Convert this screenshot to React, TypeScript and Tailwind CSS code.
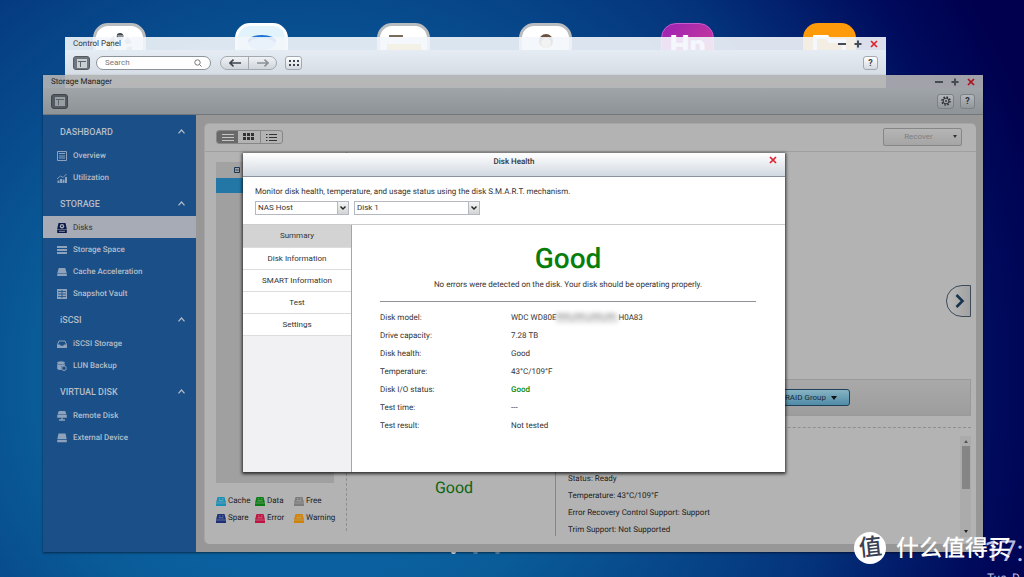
import React from "react";
import clsx from "clsx";

type IconName =
  | "overview"
  | "chart"
  | "disk"
  | "stack"
  | "drive"
  | "vault"
  | "tray"
  | "backup"
  | "remote"
  | "external";

interface NavSection {
  title: string;
  items: { label: string; icon: IconName; active?: boolean }[];
}

const NAV: NavSection[] = [
  {
    title: "DASHBOARD",
    items: [
      { label: "Overview", icon: "overview" },
      { label: "Utilization", icon: "chart" },
    ],
  },
  {
    title: "STORAGE",
    items: [
      { label: "Disks", icon: "disk", active: true },
      { label: "Storage Space", icon: "stack" },
      { label: "Cache Acceleration", icon: "drive" },
      { label: "Snapshot Vault", icon: "vault" },
    ],
  },
  {
    title: "iSCSI",
    items: [
      { label: "iSCSI Storage", icon: "tray" },
      { label: "LUN Backup", icon: "backup" },
    ],
  },
  {
    title: "VIRTUAL DISK",
    items: [
      { label: "Remote Disk", icon: "remote" },
      { label: "External Device", icon: "external" },
    ],
  },
];

const LEGEND = [
  { label: "Cache", color: "#1b8fb5" },
  { label: "Data", color: "#0b7d14" },
  { label: "Free", color: "#7d7d7d" },
  { label: "Spare", color: "#1c2f78" },
  { label: "Error", color: "#bf1443" },
  { label: "Warning", color: "#cf8208" },
];

const DISK_INFO = [
  "Status: Ready",
  "Temperature: 43°C/109°F",
  "Error Recovery Control Support: Support",
  "Trim Support: Not Supported",
];

const TABS = ["Summary", "Disk Information", "SMART Information", "Test", "Settings"];

const NAV_ICONS: Record<IconName, React.ReactNode> = {
  overview: (
    <>
      <path d="M.5.5h9v9h-9z" fill="none" stroke="currentColor" />
      <path d="M2 2.5h6M3 4v4M5 4v4M7 4v4" stroke="currentColor" />
    </>
  ),
  chart: (
    <>
      <path d="M.5 7.5h2V10h-2zM3 6h2v4H3zM5.500 6.500h2V10h-2zM8 4h2v6H8z" fill="currentColor" />
      <path d="M0 6l3.500-3L6 4.500 9.500 1" fill="none" stroke="currentColor" strokeWidth=".9" />
    </>
  ),
  disk: (
    <>
      <path d="M1.500 0h7l1.300 6H.2zM.2 6.600h9.600V10H.2z" fill="#0b1a4a" />
      <circle cx="5" cy="3.200" r="2.200" fill="#a6abb5" />
      <circle cx="5" cy="3.200" r=".9" fill="#0b1a4a" />
      <path d="M2 8.300h6" stroke="#a6abb5" strokeWidth=".8" />
    </>
  ),
  stack: <path d="M0 1h10v2H0zM0 4h10v2H0zM0 7h10v2H0z" fill="currentColor" />,
  drive: <path d="M1.800 1h6.400l1.500 5H.3zM.2 6.600h9.600V9H.2z" fill="currentColor" />,
  vault: (
    <>
      <path d="M0 0h10v10H0z" fill="currentColor" />
      <path d="M1 2.500h8M1 5h8M1 7.500h8M5 1v8" stroke="#1a4f87" strokeWidth=".8" />
    </>
  ),
  tray: (
    <>
      <path d="M2 2h6l1.500 3.500v3h-9v-3z" fill="none" stroke="currentColor" />
      <path d="M0 5.500h3l.8 1.200h2.400L7 5.500h3V9H0z" fill="currentColor" />
    </>
  ),
  backup: (
    <>
      <ellipse cx="4" cy="1.700" rx="3.800" ry="1.500" fill="currentColor" />
      <path d="M.2 2.800c1.500 1.200 6 1.200 7.600 0V5H4.500v4C2.500 9 .7 8.700.2 8z" fill="currentColor" />
      <circle cx="7" cy="7.200" r="2.300" fill="#1a4f87" stroke="currentColor" />
    </>
  ),
  remote: (
    <>
      <path d="M1.800 0h6.400l1.300 3.500H.5zM.2 4h9.600v2.800H.2z" fill="currentColor" />
      <path d="M5 6.500v2M2 9h6" stroke="currentColor" strokeWidth="1.300" />
    </>
  ),
  external: <path d="M1.500.5h7l1.200 5.500H.3zM.2 6.700h9.600v2.500H.2z" fill="currentColor" />,
};

const toolButton =
  "flex items-center justify-center rounded-[3px] border";

function DriveIcon({ color }: { color: string }) {
  return (
    <svg viewBox="0 0 10 9" className="h-[9px] w-[10px] shrink-0">
      <path d="M1.500 0h7L10 5.800H0zM0 6.300h10V9H0z" fill={color} />
      <path d="M3 1.800h1.500M6 1.800h1.500M2.500 3.800h5" stroke="#d0d0d0" strokeOpacity=".6" strokeWidth=".8" />
    </svg>
  );
}

function LayoutIcon() {
  return (
    <svg viewBox="0 0 10 9" className="h-[9px] w-[10px]">
      <path d="M0 0h10v9H0z" fill="currentColor" fillOpacity=".75" />
      <path d="M1 2.500h8M3.500 2.500V8" stroke="#5d646c" />
    </svg>
  );
}

function WindowControls({ dim }: { dim?: boolean }) {
  return (
    <div className="flex items-center gap-2">
      <button aria-label="Minimize">
        <svg viewBox="0 0 8 8" className="size-2">
          <path d="M0 4h8" stroke="#444b54" strokeWidth="2" />
        </svg>
      </button>
      <button aria-label="Maximize">
        <svg viewBox="0 0 8 8" className="size-2">
          <path d="M.5 4h7M4 .5v7" stroke="#444b54" strokeWidth="2" />
        </svg>
      </button>
      <CloseButton color={dim ? "#b0101c" : "#e0202c"} />
    </div>
  );
}

function CloseButton({ color }: { color: string }) {
  return (
    <button aria-label="Close">
      <svg viewBox="0 0 8 8" className="size-2">
        <path d="M1 1l6 6M7 1L1 7" stroke={color} strokeWidth="1.700" />
      </svg>
    </button>
  );
}

function DesktopIcons() {
  const tile =
    "flex h-[53px] w-[53px] justify-center overflow-hidden rounded-[15px]";
  const white = "border-[3px] border-[#b9bcbf] bg-white";
  return (
    <div className="flex gap-[89px] pt-[23px] pl-[93px]">
      <div className={clsx(tile, white)}>
        <svg viewBox="0 0 30 30" className="mt-[6px] size-[32px]">
          <circle cx="15" cy="4" r="3" fill="#3a3f46" />
          <circle cx="15" cy="14" r="9" fill="none" stroke="#8d949c" strokeWidth="5" strokeDasharray="5 3" />
        </svg>
      </div>
      <div className={clsx(tile, "border-[3px] border-white bg-[#e2f3fb]")}>
        <svg viewBox="0 0 30 30" className="mt-[7px] size-[30px]">
          <ellipse cx="15" cy="8" rx="14" ry="6" fill="#1d74d8" />
          <ellipse cx="15" cy="11" rx="13" ry="6" fill="#8fc0f0" />
        </svg>
      </div>
      <div className={clsx(tile, white)}>
        <svg viewBox="0 0 34 30" className="mt-[9px] h-[30px] w-[34px]">
          <path d="M2 0h14v2H2z" fill="#7a6a5c" />
          <path d="M0 9h34v18H0z" fill="#f5b62c" />
        </svg>
      </div>
      <div className={clsx(tile, white)}>
        <svg viewBox="0 0 30 30" className="mt-[8px] size-[30px]">
          <circle cx="15" cy="7" r="7" fill="#6b5142" />
          <circle cx="15" cy="9" r="5" fill="#f0c9a0" />
        </svg>
      </div>
      <div
        className={clsx(
          tile,
          "border border-[#c65bd0] bg-linear-to-br from-[#9c1fb4] to-[#d83a90] pt-[4px] text-[28px] leading-[36px] font-black text-white"
        )}
      >
        Hp
      </div>
      <div className={clsx(tile, "bg-[#ff9a0a]")}>
        <svg viewBox="0 0 34 30" className="mt-[12px] h-[30px] w-[34px]">
          <path d="M2 26V2h12l3 4h14v20z" fill="none" stroke="#fff" strokeWidth="4" />
        </svg>
      </div>
    </div>
  );
}

function ControlPanel() {
  return (
    <section className="absolute top-[37px] right-[138px] left-[65px] h-[51px]">
      <header className="flex h-[13px] items-center justify-between bg-[#f3f6fb]/90 px-2">
        <h2>Control Panel</h2>
        <WindowControls />
      </header>
      <div className="flex h-[38px] items-start gap-[6px] bg-linear-to-b from-[#e6ecf3] to-[#cdd5dd] px-2 pt-[6px]">
        <button
          aria-label="Toggle sidebar"
          className={clsx(toolButton, "h-[14px] w-[17px] border-[#545b63] bg-[#6f767e] text-[#e8edf2]")}
        >
          <LayoutIcon />
        </button>
        <label className="flex h-[14px] w-[115px] items-center rounded-full border border-[#8c939a] bg-white px-2">
          <input
            type="text"
            placeholder="Search"
            aria-label="Search"
            className="w-full min-w-0 outline-none placeholder:text-[#777]"
          />
          <svg viewBox="0 0 8 8" className="size-2 shrink-0" fill="none" stroke="#777">
            <circle cx="3.500" cy="3.500" r="2.700" />
            <path d="M5.500 5.500l2 2" />
          </svg>
        </label>
        <div className="ml-[3px] flex h-[14px] w-[57px] rounded-full border border-[#a3a9b0] bg-linear-to-b from-[#f0f2f5] to-[#d0d5db]">
          <button aria-label="Back" className="flex flex-1 items-center justify-center border-r border-[#a3a9b0]">
            <svg viewBox="0 0 12 8" className="h-2 w-3" fill="none" stroke="#3f464e" strokeWidth="1.600">
              <path d="M12 4H1M4.500.7L1 4l3.500 3.300" />
            </svg>
          </button>
          <button aria-label="Forward" className="flex flex-1 items-center justify-center">
            <svg viewBox="0 0 12 8" className="h-2 w-3" fill="none" stroke="#8b9198" strokeWidth="1.600">
              <path d="M0 4h11M7.500.7L11 4 7.500 7.300" />
            </svg>
          </button>
        </div>
        <button
          aria-label="Show all"
          className={clsx(toolButton, "ml-[2px] h-[14px] w-[17px] border-[#a3a9b0] bg-linear-to-b from-white to-[#d5dae0]")}
        >
          <svg viewBox="0 0 10 6" className="h-[6px] w-[10px]" fill="#3f464e">
            <path d="M0 0h2v2H0zM4 0h2v2H4zM8 0h2v2H8zM0 4h2v2H0zM4 4h2v2H4zM8 4h2v2H8z" />
          </svg>
        </button>
        <button
          aria-label="Help"
          className={clsx(toolButton, "ml-auto h-[14px] w-[15px] border-[#a3a9b0] bg-linear-to-b from-white to-[#d5dae0] text-[9px] font-bold text-[#3f464e]")}
        >
          ?
        </button>
      </div>
    </section>
  );
}

function Sidebar() {
  return (
    <nav className="flex w-[153px] shrink-0 flex-col gap-px bg-[#1a4f87] pt-[2px] text-[#b4bdc9]">
      {NAV.map((section) => (
        <div key={section.title}>
          <button className="flex h-[27px] w-full items-center justify-between pt-[2px] pr-[11px] pl-[17px] text-[9px] font-medium">
            {section.title}
            <svg viewBox="0 0 7 5" className="h-[5px] w-[7px]" fill="none" stroke="currentColor" strokeWidth="1.200">
              <path d="M.5 4.300l3-3.300 3 3.300" />
            </svg>
          </button>
          <ul>
            {section.items.map((item) => (
              <li key={item.label}>
                <a
                  href="#"
                  className={clsx(
                    "flex h-[22px] items-center gap-[6px] pt-px pl-[14px]",
                    item.active ? "bg-[#a6abb5] text-[#333]" : "font-medium"
                  )}
                >
                  <svg viewBox="0 0 10 10" className="size-[10px] text-[#8ea3bb]">
                    {NAV_ICONS[item.icon]}
                  </svg>
                  {item.label}
                </a>
              </li>
            ))}
          </ul>
        </div>
      ))}
    </nav>
  );
}

function DiskTree() {
  return (
    <div className="flex w-[118px] shrink-0 flex-col">
      <div className="flex-1 bg-[#a0a0a0]">
        <div className="flex h-[16px] items-center bg-[#a2a2a2] pl-[18px]">
          <svg viewBox="0 0 6 6" className="size-[6px]" fill="none" stroke="#1c3a58">
            <path d="M.5.5h5v5h-5zM1.500 3h3" />
          </svg>
        </div>
        <div className="h-[15px] bg-[#2277a6]" />
      </div>
      <ul className="grid grid-cols-[39px_39px_auto] gap-y-[5px] pt-3 pb-[20px] text-[#222]">
        {LEGEND.map((entry) => (
          <li key={entry.label} className="flex h-[12px] items-center gap-[2px]">
            <DriveIcon color={entry.color} />
            {entry.label}
          </li>
        ))}
      </ul>
    </div>
  );
}

function DiskDetails() {
  return (
    <div className="flex min-w-0 flex-1 flex-col">
      <div className="flex flex-1 items-end justify-end pb-[62px]">
        <button
          aria-label="Next enclosure"
          className="flex h-[32px] w-[25px] items-center justify-center rounded-l-full border border-[#3d4a5a] bg-linear-to-r from-[#b9b9b9] to-[#a2a2a2] pl-[3px]"
        >
          <svg viewBox="0 0 10 14" className="h-[14px] w-[10px]" fill="none" stroke="#17344f" strokeWidth="2.600">
            <path d="M1.500 1l6 6-6 6" />
          </svg>
        </button>
      </div>
      <div className="flex h-[37px] items-center justify-end border border-[#9a9a9a] bg-linear-to-b from-[#a9a9a9] to-[#9d9d9d] pr-[120px]">
        <button className="flex h-[17px] w-[149px] items-center justify-end gap-[5px] rounded-[3px] border border-[#20405c] bg-linear-to-b from-[#86b4c4] to-[#4f8ba6] pr-3 text-[#1c2a36]">
          RAID Group
          <svg viewBox="0 0 6 4" className="h-1 w-[6px]">
            <path d="M0 0h6L3 4z" fill="#111" />
          </svg>
        </button>
      </div>
      <div className="mt-[11px] flex h-[117px] border-t border-dashed border-[#8f8f8f] pt-2">
        <div className="mt-4 mb-2 flex w-[209px] shrink-0 justify-center border-r border-[#858585] pt-[24px]">
          <p className="pl-[6px] text-[16px] leading-[24px] text-[#0a650d]">Good</p>
        </div>
        <ul className="flex flex-1 flex-col justify-end pb-[6px] pl-[12px] leading-[17px] text-[#222]">
          {DISK_INFO.map((line) => (
            <li key={line}>{line}</li>
          ))}
        </ul>
        <div className="mb-[7px] flex w-[11px] flex-col items-center justify-between bg-[#ababab] py-1">
          <svg viewBox="0 0 4 3" className="h-[3px] w-1">
            <path d="M0 3h4L2 0z" fill="#555" />
          </svg>
          <div className="mt-[3px] mb-auto h-[43px] w-[8px] bg-[#858585]" />
          <svg viewBox="0 0 4 3" className="h-[3px] w-1">
            <path d="M0 0h4L2 3z" fill="#222" />
          </svg>
        </div>
      </div>
    </div>
  );
}

function StorageManager() {
  const grey = "border-[#7c8186] bg-linear-to-b from-[#b4b8bc] to-[#92979c] text-[#2b3036]";
  return (
    <section className="absolute top-[75px] right-[41px] bottom-[25px] left-[43px] flex flex-col shadow-[0_1px_2px_#0008]">
      <header className="flex h-[13px] shrink-0 items-center justify-between bg-[#b2b2b2]/90 px-[8px] text-[#222]">
        <h2>Storage Manager</h2>
        <WindowControls dim />
      </header>
      <div className="flex h-[27px] shrink-0 items-center justify-between border-b border-[#73777b] bg-linear-to-b from-[#a0a5aa] to-[#8e9397] px-[8px]">
        <button
          aria-label="Toggle sidebar"
          className={clsx(toolButton, "h-[15px] w-[17px] border-[#3f454b] bg-[#545a61] text-[#b0b5ba]")}
        >
          <LayoutIcon />
        </button>
        <div className="flex gap-[6px]">
          <button aria-label="Settings" className={clsx(toolButton, grey, "h-[15px] w-[17px]")}>
            <svg viewBox="0 0 10 10" className="size-[10px]" fill="none" stroke="currentColor">
              <circle cx="5" cy="5" r="4" strokeWidth="1.500" strokeDasharray="1.600 1.540" />
              <circle cx="5" cy="5" r="2.900" />
              <circle cx="5" cy="5" r=".9" fill="currentColor" stroke="none" />
            </svg>
          </button>
          <button aria-label="Help" className={clsx(toolButton, grey, "h-[15px] w-[15px] text-[9px] font-bold")}>
            ?
          </button>
        </div>
      </div>
      <div className="flex flex-1 bg-[#979797]">
        <Sidebar />
        <main className="mt-2 mr-[7px] mb-2 ml-2 flex min-w-0 flex-1 flex-col rounded-[5px] border-t border-l border-[#a6a6a6] bg-[#b3b3b3]">
          <div className="flex h-[28px] shrink-0 items-center justify-between border-b border-[#9f9f9f] pr-[14px] pb-[2px] pl-[11px]">
            <div className="flex h-[14px] w-[67px] overflow-hidden rounded-[3px] border border-[#868686] text-[#333]">
              <button aria-label="List view" className="flex flex-1 items-center justify-center bg-[#696969] text-[#c4c4c4]">
                <svg viewBox="0 0 12 8" className="h-2 w-3" stroke="currentColor">
                  <path d="M0 1.500h12M0 4.500h12M0 7.500h12" />
                </svg>
              </button>
              <button aria-label="Grid view" className="flex flex-1 items-center justify-center border-r border-[#868686]">
                <svg viewBox="0 0 11 7" className="h-[7px] w-[11px]" fill="currentColor">
                  <path d="M0 0h3v3H0zM4 0h3v3H4zM8 0h3v3H8zM0 4h3v3H0zM4 4h3v3H4zM8 4h3v3H8z" />
                </svg>
              </button>
              <button aria-label="Detail view" className="flex flex-1 items-center justify-center">
                <svg viewBox="0 0 11 8" className="h-2 w-[11px]" stroke="currentColor">
                  <path d="M0 1.500h1.500M3 1.500h8M0 4.500h1.500M3 4.500h8M0 7.500h1.500M3 7.500h8" />
                </svg>
              </button>
            </div>
            <button
              disabled
              className="flex h-[18px] w-[79px] items-center rounded-[2px] border border-[#868686] bg-linear-to-b from-[#b5b5b5] to-[#a5a5a5] pr-1 text-[#808080]"
            >
              <span className="flex-1">Recover</span>
              <svg viewBox="0 0 4 3" className="h-[3px] w-1">
                <path d="M0 0h4L2 3z" fill="#333" />
              </svg>
            </button>
          </div>
          <div className="flex flex-1 pr-[5px] pl-[11px]">
            <div className="flex pt-[10px]">
              <DiskTree />
            </div>
            <div className="mb-[13px] w-[13px] shrink-0 border-r border-dashed border-[#8f8f8f]" />
            <DiskDetails />
          </div>
        </main>
      </div>
    </section>
  );
}

interface PickerProps {
  label: string;
  options: string[];
  className: string;
}

const Picker: React.FC<PickerProps> = ({ label, options, className }) => (
  <div className={clsx("relative h-[14px]", className)}>
    <select
      aria-label={label}
      className="block h-full w-full appearance-none border border-[#b5b8c0] bg-white pl-[2px] leading-normal text-[#333]"
    >
      {options.map((option) => (
        <option key={option}>{option}</option>
      ))}
    </select>
    <span className="pointer-events-none absolute inset-y-0 right-0 flex w-[12px] items-center justify-center border border-[#b5b8c0] bg-linear-to-b from-[#f4f4f4] to-[#d4d4d4]">
      <svg viewBox="0 0 6 4" className="h-1 w-[6px]" fill="none" stroke="#222" strokeWidth="1.400">
        <path d="M.5.5L3 3 5.500.5" />
      </svg>
    </span>
  </div>
);

const Redacted = () => (
  <svg viewBox="0 0 66 12" className="h-3 w-[62px] blur-[2px]" preserveAspectRatio="none">
    <path d="M0 1h66v10H0z" fill="#e2e2e2" />
    <path d="M0 1h14v5H0zM20 1h10v5H20zM38 1h10v5H38zM54 1h8v5h-8z" fill="#c6c6c6" />
    <path d="M14 4h6v5h-6zM32 3h6v6h-6zM48 4h6v5h-6z" fill="#d4d4d4" />
  </svg>
);

function DiskHealthDialog() {
  const rows: { label: string; value: React.ReactNode }[] = [
    {
      label: "Disk model:",
      value: (
        <span className="flex items-center">
          WDC WD80E
          <Redacted />
          H0A83
        </span>
      ),
    },
    { label: "Drive capacity:", value: "7.28 TB" },
    { label: "Disk health:", value: "Good" },
    { label: "Temperature:", value: "43°C/109°F" },
    { label: "Disk I/O status:", value: <span className="font-medium text-[#0a8a0a]">Good</span> },
    { label: "Test time:", value: "---" },
    { label: "Test result:", value: "Not tested" },
  ];

  return (
    <section
      role="dialog"
      aria-label="Disk Health"
      className="absolute top-[153px] right-[239px] bottom-[105px] left-[243px] flex flex-col bg-white text-[#333] shadow-[0_1px_3px_1px_#000b]"
    >
      <header className="relative flex h-[24px] shrink-0 justify-center border-b border-[#8a939b] bg-linear-to-b from-white to-[#d2d9e1] pt-[3px]">
        <h2 className="font-medium">Disk Health</h2>
        <div className="absolute top-[3px] right-2 flex">
          <CloseButton color="#e0202c" />
        </div>
      </header>
      <div className="flex h-[48px] shrink-0 flex-col gap-[3px] border-b border-[#ccc] px-3 pt-[9px]">
        <p>Monitor disk health, temperature, and usage status using the disk S.M.A.R.T. mechanism.</p>
        <div className="flex gap-[5px]">
          <Picker label="Host" options={["NAS Host"]} className="w-[94px]" />
          <Picker label="Disk" options={["Disk 1"]} className="w-[126px]" />
        </div>
      </div>
      <div className="flex flex-1">
        <div className="flex w-[109px] shrink-0 flex-col border-r border-[#a5a5a8] bg-[#f1f1f4]">
          {TABS.map((tab, i) => (
            <button
              key={tab}
              className={clsx(
                "border-b border-[#dcdcdf]",
                i === 0 ? "h-[23px] bg-[#d3d3d3]" : "h-[22px] bg-white"
              )}
            >
              {tab}
            </button>
          ))}
        </div>
        <div className="flex-1 pr-[29px] pl-[28px]">
          <p className="pt-4 text-center text-[28px] leading-[36px] font-medium text-[#077d0b]">Good</p>
          <p className="pt-[2px] pb-[10px] text-center">
            No errors were detected on the disk. Your disk should be operating properly.
          </p>
          <dl className="grid grid-cols-[131px_1fr] border-t border-[#8f9397] pt-[7px] leading-[18px]">
            {rows.map((row) => (
              <React.Fragment key={row.label}>
                <dt>{row.label}</dt>
                <dd>{row.value}</dd>
              </React.Fragment>
            ))}
          </dl>
        </div>
      </div>
    </section>
  );
}

function App() {
  return (
    <div className="relative h-screen w-full overflow-hidden bg-[radial-gradient(ellipse_75%_130%_at_30%_65%,#0c6db0_0%,#0a5c99_35%,#04337c_70%,#000a5c_90%,#00004e_100%)] font-['Roboto','Noto_Sans_CJK_SC',sans-serif] text-[8px] leading-[12px] text-[#333] [text-rendering:geometricPrecision]">
      <DesktopIcons />
      <div className="absolute inset-x-0 bottom-[23px] flex justify-center gap-[17px] pr-[74px]">
        <span className="size-[5px] rounded-full bg-white" />
        <span className="size-[5px] rounded-full bg-[#6fa0c8]" />
        <span className="size-[5px] rounded-full bg-[#6fa0c8]" />
      </div>
      <ControlPanel />
      <StorageManager />
      <DiskHealthDialog />
      <div className="absolute top-[537px] left-[984px] whitespace-nowrap text-[#b9bce0]">
        <p className="text-[29px] leading-[30px]">17:</p>
        <p className="pl-[3px] text-[12px] leading-[22px]">Tue, D</p>
      </div>
      <div className="absolute right-[13px] bottom-3 flex items-center gap-[10px] text-white">
        <span className="flex size-[32px] items-center justify-center rounded-full bg-white">
          <span className="-rotate-6 text-[23px] leading-[32px] font-medium text-[#3a3f52]">值</span>
        </span>
        <span className="pt-[2px] text-[23px] leading-[32px] font-medium whitespace-nowrap">什么值得买</span>
      </div>
    </div>
  );
}

export default App;
